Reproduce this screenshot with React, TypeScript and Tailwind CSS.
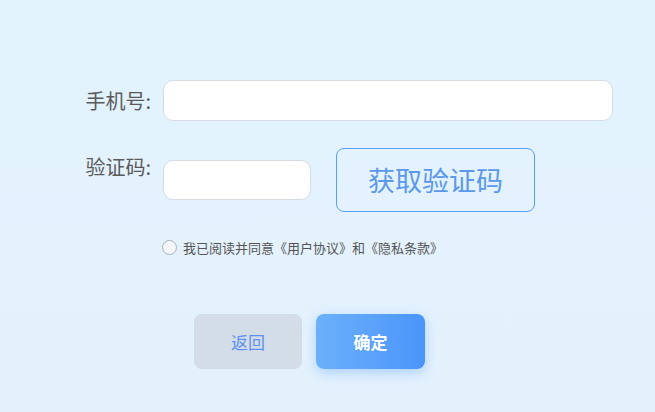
import { useState } from 'react';

const font = { fontFamily: '"Noto Sans CJK SC", "Noto Sans", sans-serif' };

const App = () => {
  const [phone, setPhone] = useState('');
  const [code, setCode] = useState('');
  const [agreed, setAgreed] = useState(false);

  return (
    <div
      className="w-[655px] h-[412px] overflow-hidden bg-gradient-to-b from-[#e2f3fe] to-[#e4f1fd] pt-[80px]"
      style={font}
    >
      {/* 手机号 */}
      <div className="flex items-center">
        <label className="w-[151px] text-right text-[20px] leading-none text-[#5a5a5a]">
          手机号:
        </label>
        <input
          className="ml-[12px] w-[450px] h-[41px] rounded-[10px] border border-[#d6dbe1] bg-white px-3 text-[16px] outline-none"
          value={phone}
          onChange={(e) => setPhone(e.target.value)}
        />
      </div>

      {/* 验证码 */}
      <div className="flex items-start mt-[27px]">
        <label className="w-[151px] mt-[9px] text-right text-[20px] leading-none text-[#5a5a5a]">
          验证码:
        </label>
        <input
          className="ml-[12px] mt-[12px] w-[148px] h-[40px] rounded-[10px] border border-[#d6dbe1] bg-white px-3 text-[16px] outline-none"
          value={code}
          onChange={(e) => setCode(e.target.value)}
        />
        <button className="ml-[25px] w-[199px] h-[64px] rounded-[8px] border border-[#5a9ff6] bg-transparent text-[27px] text-[#5b98ec]">
          获取验证码
        </button>
      </div>

      {/* 协议 */}
      <div className="flex items-center mt-[28px] ml-[162px]">
        <button
          className={`w-[15px] h-[15px] rounded-full border ${
            agreed ? 'border-[#4a97fa] bg-[#4a97fa]' : 'border-[#aab0b8] bg-[#f4f5f7]'
          }`}
          onClick={() => setAgreed(!agreed)}
        />
        <span className="ml-[6px] text-[13px] leading-none text-[#555]">
          我已阅读并同意《用户协议》和《隐私条款》
        </span>
      </div>

      {/* 按钮 */}
      <div className="flex mt-[59px] ml-[194px] gap-[14px]">
        <button className="w-[108px] h-[55px] rounded-[8px] bg-[#d3dde7] text-[17px] text-[#5f8ff2]">
          返回
        </button>
        <button className="w-[109px] h-[55px] rounded-[8px] bg-gradient-to-r from-[#6cb0fb] to-[#4a95fb] text-[17px] font-bold text-white shadow-[0_4px_12px_rgba(74,149,251,0.35)]">
          确定
        </button>
      </div>
    </div>
  );
};

export default App;
